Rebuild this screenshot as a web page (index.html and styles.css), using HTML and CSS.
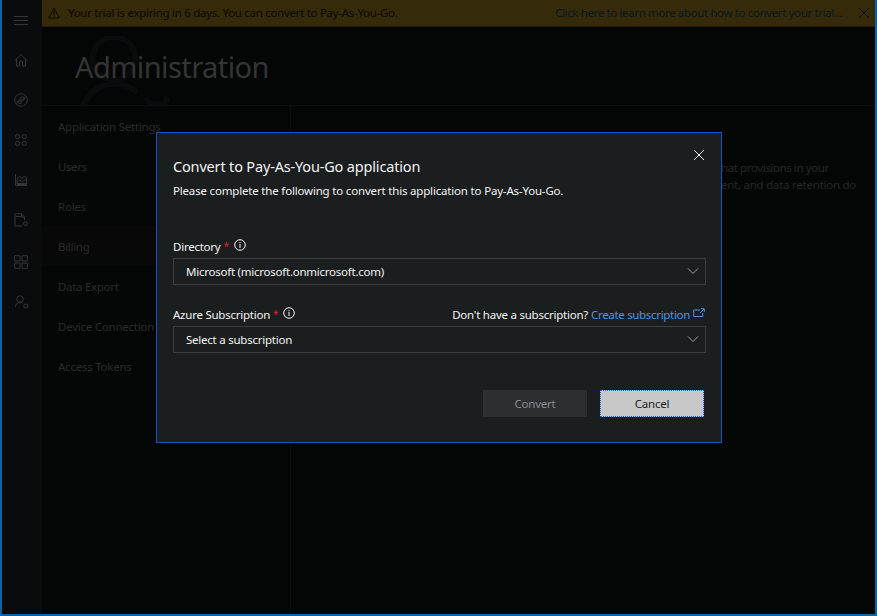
FILE: index.html
```html
<!DOCTYPE html>
<html lang="en">
<head>
<meta charset="utf-8">
<title>Administration</title>
<link rel="stylesheet" href="styles.css">
</head>
<body>
<div class="app">
  <nav class="rail">
    <svg class="icon" viewBox="0 0 14 14"><path d="M0 3.500h14M0 7.500h14M0 11.500h14"/></svg>
    <svg class="icon" viewBox="0 0 14 14"><path d="M1 7.500 7 1.500 13 7.500M2.500 6v7h3V9c0-1.800 3-1.800 3 0v4h3V6"/></svg>
    <svg class="icon" viewBox="0 0 14 14"><circle cx="7" cy="7" r="6.300"/><circle cx="8.200" cy="5.400" r="1.700"/><circle cx="6" cy="9.300" r="1.500"/><path d="M2.200 10.800 4.500 7.600 6.800 6M7.200 8.600 9.700 7 11.600 3.400"/></svg>
    <svg class="icon" viewBox="0 0 14 14"><circle cx="3.500" cy="3.600" r="2.100"/><circle cx="10.300" cy="3.600" r="2.100"/><circle cx="3.500" cy="10.400" r="2.100"/><circle cx="10.300" cy="10.400" r="2.100"/></svg>
    <svg class="icon" viewBox="0 0 14 14"><path d="M1.500 1v11.500H13M3 6l2.500-2.500L8 5l2.500-1.500 2 1.500v6.500H3zM3 9l3-2 2 1.500 4-2M3 10.500h9"/></svg>
    <svg class="icon" viewBox="0 0 14 14"><path d="M8 13H1V.8h6.500l3 3V7M2 3.500h6M7.500 1v3h3"/><circle cx="11.500" cy="10.500" r="1.900"/></svg>
    <svg class="icon apps" viewBox="0 0 14 14"><path d="M.7.7h5.300v5.300H.7zM8 .7h5.300v5.300H8zM.7 8h5.300v5.300H.7zM8 8h5.300v5.300H8z"/></svg>
    <svg class="icon" viewBox="0 0 14 14"><circle cx="6" cy="4" r="3.200"/><path d="M1.300 12c.3-3 2.200-4.800 4.700-4.800 1.200 0 2 .3 2.700 1M10 9.300h3.400v3.400H10z"/></svg>
  </nav>
  <div class="main">
    <div class="banner">
      <svg class="warn" viewBox="0 0 12 12"><path d="M6 1 11.300 11H.7zM6 4.200v3.600M6 8.600v1.200"/></svg>
      <span class="trial">Your trial is expiring in 6 days. You can convert to Pay-As-You-Go.</span>
      <span class="learn">Click here to learn more about how to convert your trial...</span>
      <svg class="dismiss" viewBox="0 0 12 12"><path d="m1 1 10 10M11 1 1 11"/></svg>
    </div>
    <header class="header">
      <svg class="mark" viewBox="0 0 96 70"><circle cx="37" cy="22.500" r="21.500"/><path d="M5 73a33.500 33.500 0 0 1 55.500-16"/><path d="m69 61 4 7h14l4-7" /></svg>
      <h1><span>Administration</span></h1>
    </header>
    <div class="body">
      <ul class="menu-list">
        <li><span class="n1">Application Settings</span></li>
        <li><span class="n2">Users</span></li>
        <li><span class="n3">Roles</span></li>
        <li class="active"><span class="n4">Billing</span></li>
        <li><span class="n5">Data Export</span></li>
        <li><span class="n6">Device Connection</span></li>
        <li><span class="n7">Access Tokens</span></li>
      </ul>
      <div class="content">
        <p><span class="c1">hat provisions in your</span></p>
        <p><span class="c2">ent, and data retention do</span></p>
      </div>
    </div>
  </div>
</div>
<section class="dialog" role="dialog">
  <div class="title-row">
    <h2><span>Convert to Pay-As-You-Go application</span></h2>
    <svg class="close" viewBox="0 0 12 12"><path d="m1 1 10 10M11 1 1 11"/></svg>
  </div>
  <p class="lead"><span>Please complete the following to convert this application to Pay-As-You-Go.</span></p>
  <div class="label-row first">
    <span class="l1">Directory</span><b class="req">*</b>
    <svg class="info" viewBox="0 0 12 12"><circle cx="6" cy="6" r="5.300"/><path d="M6 5v4M6 3v1.200"/></svg>
  </div>
  <div class="select"><span class="s1">Microsoft (microsoft.onmicrosoft.com)</span><svg class="chev" viewBox="0 0 12 8"><path d="m1 1.500 5 5 5-5"/></svg></div>
  <div class="label-row second">
    <span class="l2">Azure Subscription</span><b class="req">*</b>
    <svg class="info" viewBox="0 0 12 12"><circle cx="6" cy="6" r="5.300"/><path d="M6 5v4M6 3v1.200"/></svg>
    <span class="ask">Don't have a subscription?</span>
    <span class="create">Create subscription</span>
    <svg class="ext" viewBox="0 0 12 10"><path d="M7 2H.7v6.500h9V5M7 5l4-4M8 .7h3.300V4"/></svg>
  </div>
  <div class="select"><span class="s2">Select a subscription</span><svg class="chev" viewBox="0 0 12 8"><path d="m1 1.500 5 5 5-5"/></svg></div>
  <div class="actions">
    <div class="btn convert"><span class="b1">Convert</span></div>
    <div class="btn cancel"><span class="b2">Cancel</span></div>
  </div>
</section>
</body>
</html>
```
FILE: styles.css
```css
* { box-sizing: border-box; }
body { margin: 0; width: 877px; height: 616px; overflow: hidden; background: #040605; font-family: "Noto Sans", "Open Sans", sans-serif; font-size: 11.5px; letter-spacing: -0.24px; }
h1, h2, p, ul { margin: 0; padding: 0; font-weight: 400; }
svg { fill: none; stroke: currentColor; stroke-width: 1; flex: none; }
span { white-space: nowrap; }
.app { display: flex; height: 616px; border: solid #10639f; border-width: 0 2px 2px; }
.rail { width: 40px; background: #090b0d; color: #343638; display: flex; flex-direction: column; align-items: center; padding: 13px 2px 0 0; gap: 26px; }
.icon { width: 14px; height: 14px; }
.apps { margin-top: 2px; }
.main { flex: 1; min-width: 0; display: flex; flex-direction: column; }
.banner { height: 27px; flex: none; background: #352a09; border-bottom: 1px solid #241c06; display: flex; align-items: center; color: #0a0902; padding: 0 5px 0 6px; }
.warn { width: 12px; height: 12px; margin-right: 8px; }
.trial, .learn { line-height: 15px; margin-bottom: 1px; }
.trial { letter-spacing: -0.29px; }
.learn { margin-left: auto; margin-right: 16px; color: #0b1720; letter-spacing: -0.37px; }
.dismiss { width: 12px; height: 12px; }
.header { height: 79px; flex: none; border-bottom: 1px solid #0b0d0d; position: relative; overflow: hidden; padding-left: 33px; }
.mark { position: absolute; left: 35px; top: 9px; width: 96px; height: 70px; color: #090b0c; stroke-width: 6; }
h1 { position: relative; font-size: 29px; line-height: 80px; color: #333535; letter-spacing: -0.56px; }
.body { flex: 1; display: flex; }
.menu-list { width: 249px; border-right: 1px solid #0b0d0d; list-style: none; color: #292b2b; }
li { height: 40px; line-height: 42px; padding-left: 16px; }
.n2 { letter-spacing: -0.4px; }
.n4, .n5 { letter-spacing: -0.3px; }
.active { background: #070807; }
.content { flex: 1; padding: 53px 0 0 430px; color: #252727; line-height: 17px; }
.c1 { letter-spacing: -0.4px; }
.c2 { letter-spacing: -0.25px; }
.dialog { position: absolute; left: 156px; top: 132px; width: 566px; height: 311px; border: 1px solid #1453c4; background: #1b1e1f; color: #f2f2f2; padding: 16px 15px 0 16px; }
.title-row { display: flex; justify-content: space-between; height: 33px; }
h2 { font-size: 14.5px; line-height: 35px; letter-spacing: -0.17px; }
.close { width: 12px; height: 12px; margin-right: 1px; }
.lead { line-height: 18px; letter-spacing: -0.18px; }
.label-row { display: flex; align-items: center; height: 18px; }
.first { margin-top: 37px; }
.second { margin-top: 20px; }
.req { color: #e01b24; margin-left: 3px; font-weight: 400; font-size: 10px; }
.info { width: 12px; height: 12px; margin-left: 5px; margin-top: -2px; }
.ask { margin-left: auto; letter-spacing: -0.24px; }
.create { color: #4f94e0; margin-left: 3px; letter-spacing: -0.32px; }
.ext { width: 12px; height: 10px; margin: -3px 1px 0 3px; color: #4f94e0; }
.select { height: 27px; width: 533px; margin-top: 3px; border: 1px solid #3b3d3e; display: flex; align-items: center; justify-content: space-between; padding: 0 6px 1px 12px; }
.chev { width: 12px; height: 8px; color: #a0a2a2; }
.actions { display: flex; gap: 13px; justify-content: flex-end; margin: 37px 2px 0 0; }
.btn { width: 104px; height: 27px; text-align: center; line-height: 25px; border: 1px solid #2d2e32; }
.convert { background: #2d2e32; color: #8b8c8e; }
.cancel { background: #c8c8c8; color: #202124; border: 1px dotted #1560e8; }
```
